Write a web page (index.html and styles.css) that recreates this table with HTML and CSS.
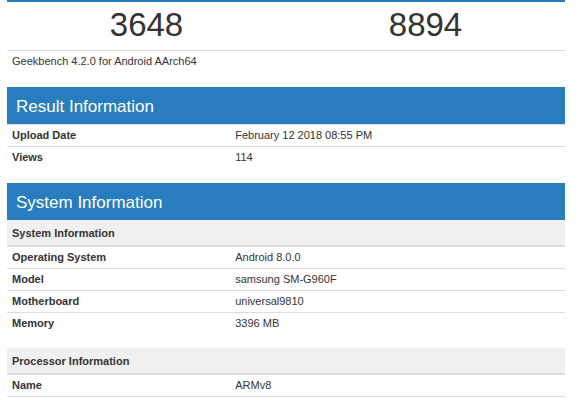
FILE: index.html
```html
<!DOCTYPE html>
<html>
<head>
<meta charset="utf-8">
<link rel="stylesheet" href="styles.css">
</head>
<body>
<div class="page">
  <div class="scores">
    <div class="score">3648</div>
    <div class="score">8894</div>
  </div>
  <div class="version">Geekbench 4.2.0 for Android AArch64</div>

  <section class="section">
    <h2 class="title">Result Information</h2>
    <table class="info">
      <tr><td class="label">Upload Date</td><td class="value">February 12 2018 08:55 PM</td></tr>
      <tr><td class="label">Views</td><td class="value">114</td></tr>
    </table>
  </section>

  <section class="section">
    <h2 class="title">System Information</h2>
    <table class="info">
      <thead><tr><th colspan="2" class="head">System Information</th></tr></thead>
      <tbody>
        <tr><td class="label">Operating System</td><td class="value">Android 8.0.0</td></tr>
        <tr><td class="label">Model</td><td class="value">samsung SM-G960F</td></tr>
        <tr><td class="label">Motherboard</td><td class="value">universal9810</td></tr>
        <tr><td class="label">Memory</td><td class="value">3396 MB</td></tr>
      </tbody>
    </table>
    <table class="info sub">
      <thead><tr><th colspan="2" class="head">Processor Information</th></tr></thead>
      <tbody>
        <tr><td class="label">Name</td><td class="value">ARMv8</td></tr>
      </tbody>
    </table>
  </section>
</div>
</body>
</html>
```

FILE: styles.css
```css
html, body {
  margin: 0;
  padding: 0;
  background: #fff;
}

body {
  font-family: "Liberation Sans", Arial, sans-serif;
  font-size: 11px;
  color: #333;
}

.page {
  width: 558px;
  margin-left: 7px;
}

.scores {
  display: grid;
  grid-template-columns: 1fr 1fr;
  border-top: 2px solid #277dbd;
  border-bottom: 1px solid #ddd;
}

.score {
  text-align: center;
  font-size: 33px;
  line-height: 37px;
  padding: 4px 0 7px;
  color: #333;
}

.version {
  padding: 5px;
  line-height: 11px;
  margin-bottom: 15px;
}

.section {
  margin-bottom: 15px;
}

.title {
  margin: 0;
  background: #277dbd;
  color: #fff;
  font-weight: normal;
  font-size: 17px;
  line-height: 35px;
  padding: 2px 9px 0;
}

.info {
  width: 100%;
  border-collapse: collapse;
  border-spacing: 0;
}

.info td {
  border-top: 1px solid #ddd;
  padding: 5px;
  line-height: 11px;
  vertical-align: top;
}

.info .label {
  width: 40%;
  font-weight: bold;
}

.info .head {
  background: #f0f0f0;
  text-align: left;
  font-weight: bold;
  padding: 7px 5px 6px;
  line-height: 12px;
  border-bottom: 2px solid #ddd;
}

.info thead + tbody tr:first-child td {
  border-top: none;
}

.info.sub {
  margin-top: 14px;
}

.info.sub tbody tr:last-child td {
  border-bottom: 1px solid #ddd;
}
```
